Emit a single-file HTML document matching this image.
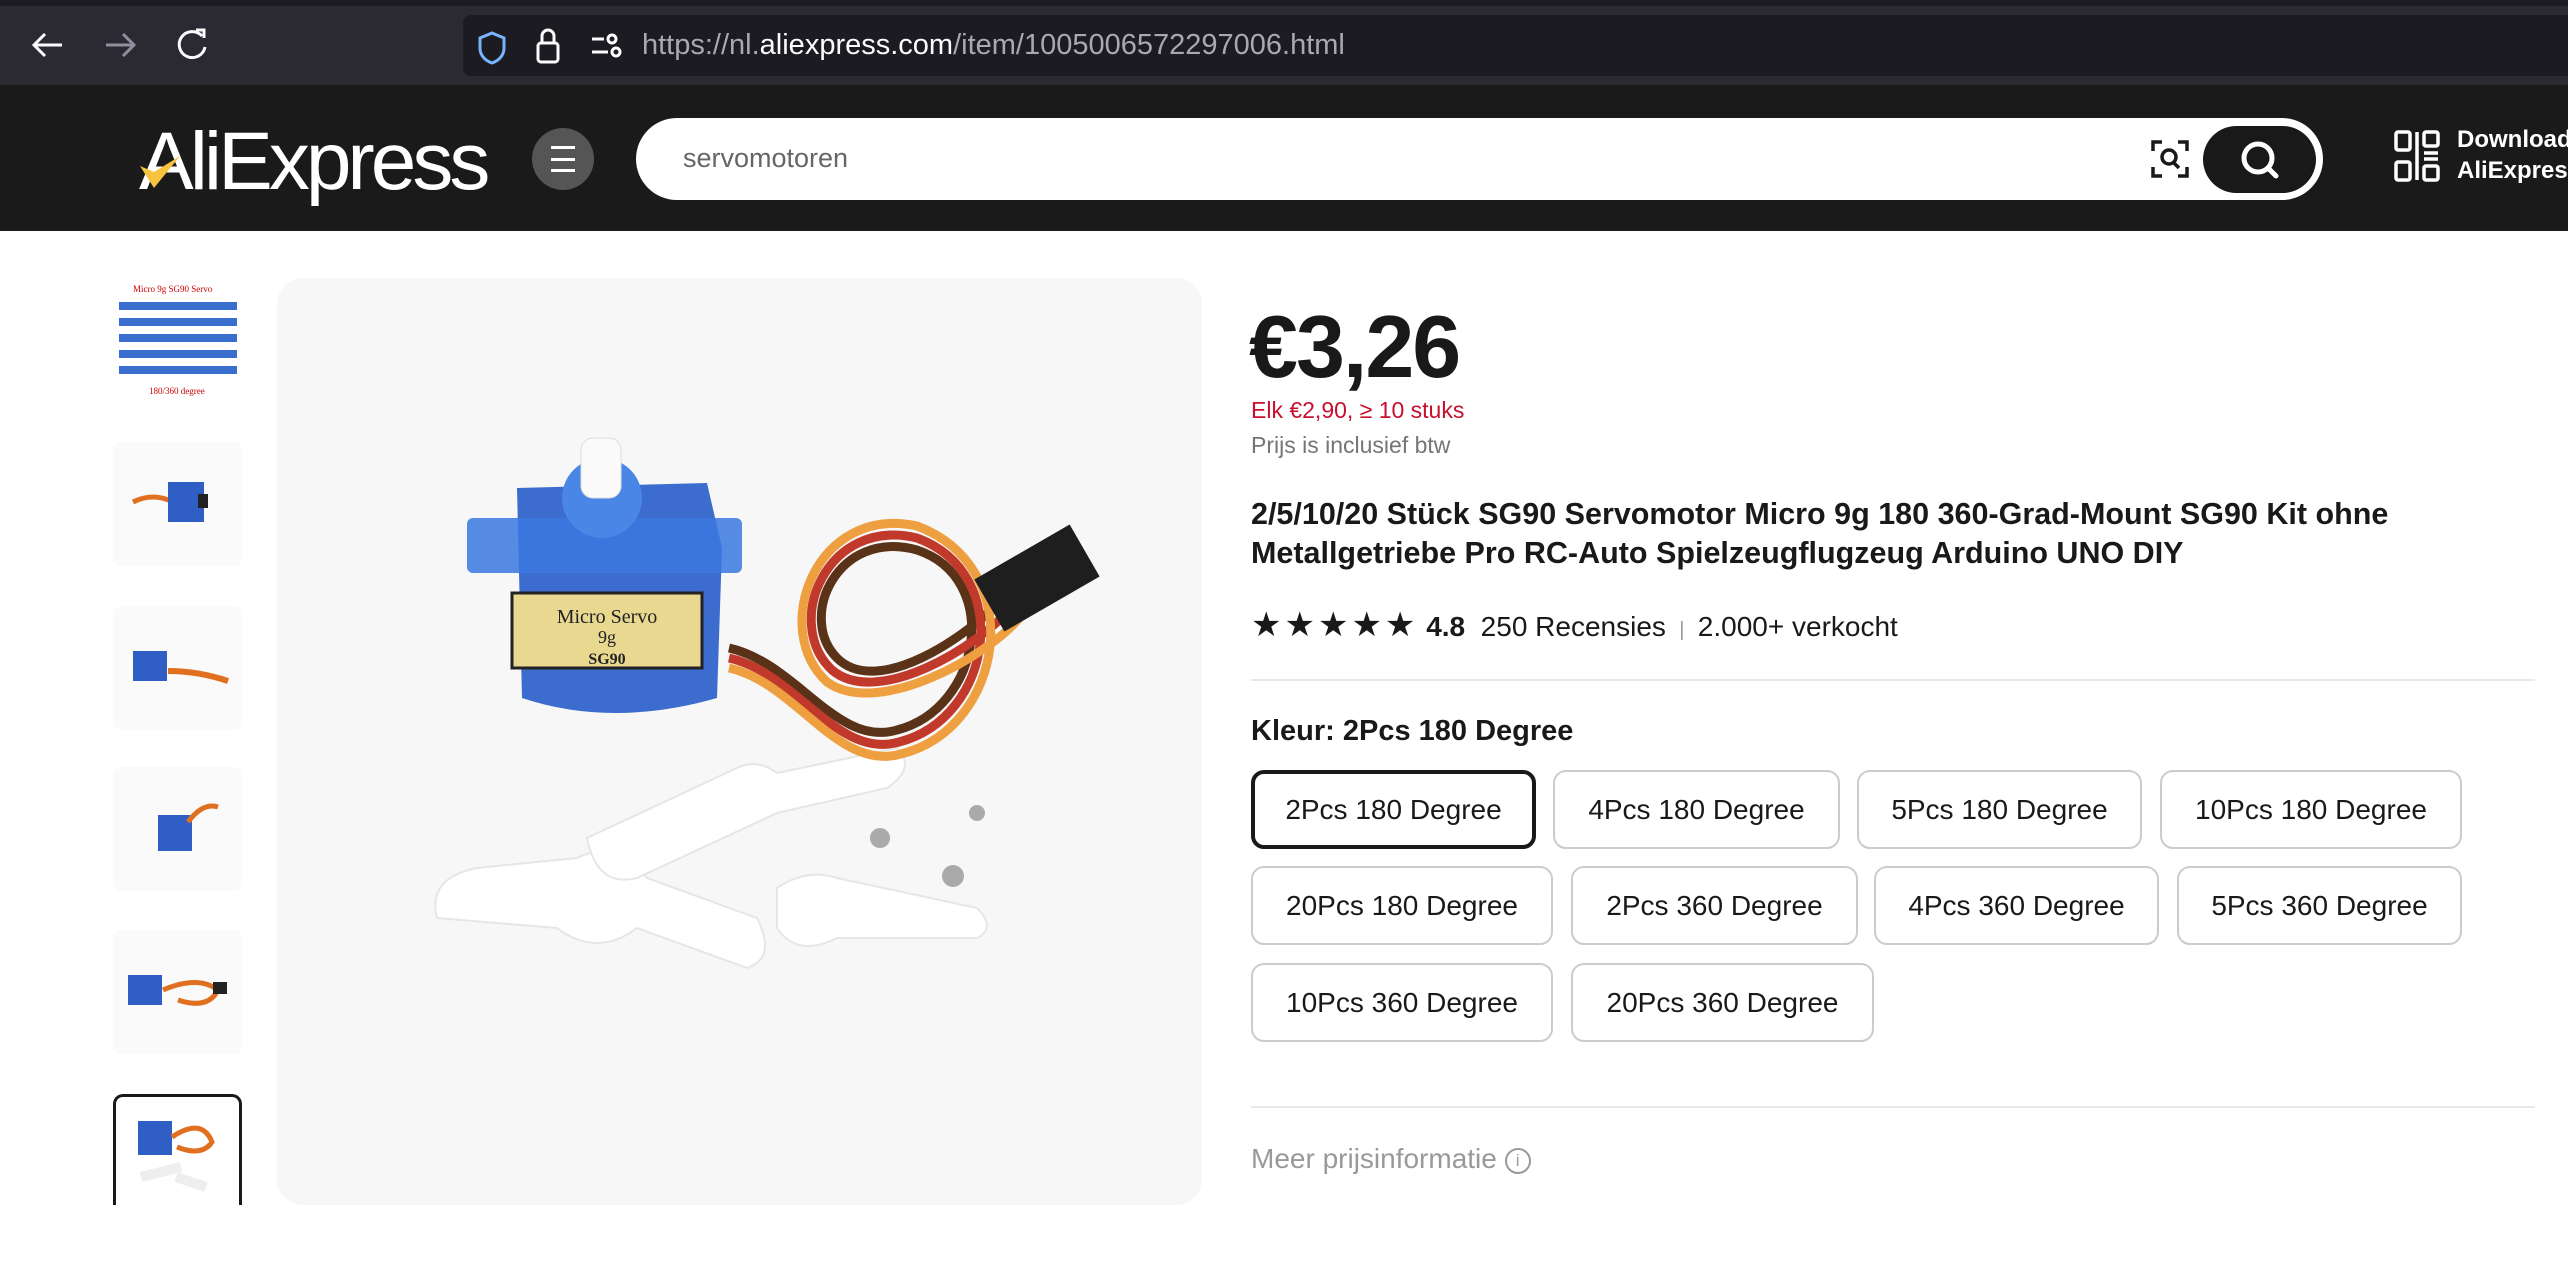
<!DOCTYPE html>
<html><head><meta charset="utf-8"><style>
*{margin:0;padding:0;box-sizing:border-box}
body{width:2568px;height:1260px;overflow:hidden;background:#fff;font-family:"Liberation Sans",sans-serif;position:relative}
.a{position:absolute}
.btn{position:absolute;height:79px;border:2px solid #ccc;border-radius:13px;font-size:28px;color:#191919;display:flex;align-items:center;justify-content:center;white-space:nowrap}
.sel{border:4px solid #191919}
.th{position:absolute;left:113px;width:129px;height:124px;background:#fafafa;border-radius:8px;overflow:hidden}
</style></head><body>
<div class="a" style="left:0;top:0;width:2568px;height:14px;background:#1c1b22"></div>
<div class="a" style="left:0;top:6px;width:2568px;height:79px;background:#2b2a33"></div>
<div class="a" style="left:463px;top:15px;width:2105px;height:61px;background:#1c1b22;border-radius:8px 0 0 8px"></div>
<svg class="a" style="left:30px;top:30px" width="36" height="30" viewBox="0 0 36 30"><path d="M32 15H5M15 4L4 15l11 11" stroke="#fbfbfe" stroke-width="3" fill="none"/></svg>
<svg class="a" style="left:102px;top:30px" width="36" height="30" viewBox="0 0 36 30"><path d="M4 15h27M21 4l11 11-11 11" stroke="#8f8f9d" stroke-width="3" fill="none"/></svg>
<svg class="a" style="left:175px;top:27px" width="34" height="36" viewBox="0 0 34 36"><path d="M27 9A13 13 0 1 0 30 20" stroke="#fbfbfe" stroke-width="3" fill="none"/><path d="M21 3h8v8" stroke="#fbfbfe" stroke-width="3" fill="none"/></svg>
<svg class="a" style="left:477px;top:30px" width="30" height="36" viewBox="0 0 30 36"><path d="M15 3L27 8v10c0 8-6 13-12 15C9 31 3 26 3 18V8z" stroke="#7ab4ff" stroke-width="3" fill="none"/></svg>
<svg class="a" style="left:535px;top:27px" width="26" height="38" viewBox="0 0 26 38"><rect x="3" y="16" width="20" height="19" rx="3" stroke="#fbfbfe" stroke-width="3" fill="none"/><path d="M7 16V9a6 6 0 0 1 12 0v7" stroke="#fbfbfe" stroke-width="3" fill="none"/></svg>
<svg class="a" style="left:590px;top:32px" width="32" height="28" viewBox="0 0 32 28"><path d="M2 7h12M2 20h16" stroke="#fbfbfe" stroke-width="3"/><circle cx="22" cy="7" r="4" stroke="#fbfbfe" stroke-width="3" fill="none"/><circle cx="26" cy="20" r="4" stroke="#fbfbfe" stroke-width="3" fill="none"/></svg>
<div class="a" style="left:642px;top:29px;font-size:29px;color:#a8a8b0;white-space:nowrap">https://nl.<span style="color:#fbfbfe">aliexpress.com</span>/item/1005006572297006.html</div>
<div class="a" style="left:0;top:85px;width:2568px;height:146px;background:#1a1a1a"></div>
<div class="a" style="left:139px;top:112px;font-size:82px;color:#fff;font-weight:400;letter-spacing:-4px;white-space:nowrap;line-height:100px">AliExpress</div>
<svg class="a" style="left:138px;top:152px" width="44" height="40" viewBox="0 0 44 40"><path d="M2 14l14 6L42 4 16 36z" fill="#f7c33f"/></svg>
<div class="a" style="left:532px;top:128px;width:62px;height:62px;border-radius:50%;background:#555"></div>
<div class="a" style="left:551px;top:146px;width:24px;height:26px;border-top:3px solid #fff;border-bottom:3px solid #fff"></div>
<div class="a" style="left:551px;top:158px;width:24px;height:3px;background:#fff"></div>
<div class="a" style="left:636px;top:118px;width:1687px;height:82px;background:#fff;border-radius:41px"></div>
<div class="a" style="left:683px;top:143px;font-size:27px;color:#666">servomotoren</div>
<svg class="a" style="left:2150px;top:139px" width="40" height="40" viewBox="0 0 40 40"><path d="M3 12V3h9M28 3h9v9M37 28v9h-9M12 37H3v-9" stroke="#191919" stroke-width="3.5" fill="none"/><circle cx="19" cy="18" r="7" stroke="#191919" stroke-width="3.5" fill="none"/><path d="M24 24l5 5" stroke="#191919" stroke-width="3.5"/></svg>
<div class="a" style="left:2203px;top:126px;width:113px;height:67px;background:#191919;border-radius:34px"></div>
<svg class="a" style="left:2238px;top:138px" width="44" height="44" viewBox="0 0 44 44"><circle cx="20" cy="20" r="14" stroke="#fff" stroke-width="5" fill="none"/><path d="M30 30l8 8" stroke="#fff" stroke-width="5" stroke-linecap="round"/></svg>
<svg class="a" style="left:2394px;top:130px" width="48" height="52" viewBox="0 0 48 52"><g stroke="#fff" stroke-width="3.5" fill="none"><rect x="2" y="2" width="14" height="18" rx="2"/><rect x="30" y="2" width="14" height="14" rx="2"/><rect x="2" y="32" width="14" height="18" rx="2"/><rect x="30" y="36" width="14" height="14" rx="2"/><path d="M23 2v48M30 23h14M30 29h14"/></g></svg>
<div class="a" style="left:2457px;top:124px;font-size:24px;color:#fff;font-weight:700;line-height:31px;white-space:nowrap">Download<br>AliExpress</div>
<div class="th" style="top:282px;background:#fff"><svg width="129" height="124"><text x="20" y="10" font-size="9" fill="#c00" font-family="Liberation Serif">Micro 9g SG90 Servo</text><g fill="#3a6fd0"><rect x="6" y="20" width="118" height="8"/><rect x="6" y="36" width="118" height="8"/><rect x="6" y="52" width="118" height="8"/><rect x="6" y="68" width="118" height="8"/><rect x="6" y="84" width="118" height="8"/></g><text x="36" y="112" font-size="9" fill="#c00" font-family="Liberation Serif">180/360 degree</text></svg></div>
<div class="th" style="top:442px"><svg width="129" height="124"><path d="M20 60q20-10 40 0" stroke="#e07020" stroke-width="5" fill="none"/><rect x="55" y="40" width="36" height="40" fill="#2f5fc4"/><rect x="85" y="52" width="10" height="14" fill="#222"/></svg></div>
<div class="th" style="top:606px"><svg width="129" height="124"><rect x="20" y="45" width="34" height="30" fill="#2f5fc4"/><path d="M55 65q30 0 60 10" stroke="#e07020" stroke-width="6" fill="none"/></svg></div>
<div class="th" style="top:767px"><svg width="129" height="124"><rect x="45" y="48" width="34" height="36" fill="#2f5fc4"/><path d="M75 55q15-20 30-15" stroke="#e07020" stroke-width="5" fill="none"/></svg></div>
<div class="th" style="top:930px"><svg width="129" height="124"><rect x="15" y="45" width="34" height="30" fill="#2f5fc4"/><path d="M50 60q35-15 55 0q-10 20-40 10" stroke="#e07020" stroke-width="5" fill="none"/><rect x="100" y="52" width="14" height="12" fill="#222"/></svg></div>
<div class="th" style="top:1094px;border:3px solid #191919;border-bottom:none;border-radius:10px 10px 0 0;height:112px;background:#fff"><svg width="123" height="110"><rect x="22" y="24" width="34" height="34" fill="#2f5fc4"/><path d="M56 40q30-20 40 5q-10 15-35 5" stroke="#e07020" stroke-width="5" fill="none"/><path d="M25 80l40-10M60 80l30 10" stroke="#eee" stroke-width="10"/></svg></div>
<div class="a" style="left:0;top:1205px;width:300px;height:60px;background:#fff"></div>
<div class="a" style="left:277px;top:278px;width:925px;height:927px;background:#f7f7f7;border-radius:26px;overflow:hidden">
<svg width="925" height="927" viewBox="0 0 925 927">
<g fill="#fff" stroke="#e6e6e6" stroke-width="2">
<path d="M160 640 Q150 600 200 590 L300 580 Q340 560 370 600 L480 640 Q500 680 470 690 L360 650 Q320 680 280 650 Z"/>
<path d="M310 560 L460 490 Q480 480 500 495 L620 470 Q640 490 610 510 L500 535 L360 600 Q320 610 310 560 Z"/>
<path d="M500 610 Q530 590 560 600 L700 630 Q720 650 700 660 L560 660 Q520 680 500 650 Z"/>
</g>
<g fill="#aaa"><circle cx="603" cy="560" r="10"/><circle cx="700" cy="535" r="8"/><circle cx="676" cy="598" r="11"/></g>
<g fill="none" stroke-width="9">
<path d="M452 370 C520 385 560 470 620 452 C705 430 725 300 640 272 C560 250 520 340 560 380 C600 420 690 360 728 318" stroke="#5a3218"/>
<path d="M452 380 C520 395 560 482 622 464 C716 440 738 296 640 260 C550 238 505 345 555 392 C600 430 700 370 736 328" stroke="#c0392b"/>
<path d="M452 390 C520 405 560 494 624 476 C728 450 752 290 640 248 C540 226 492 350 550 404 C600 440 710 380 744 338" stroke="#eea040"/>
</g>
<rect x="705" y="270" width="110" height="60" fill="#1e1e1e" transform="rotate(-30 760 300)"/>
<path d="M240 210 L430 205 L445 270 L440 420 Q335 450 245 420 Z" fill="#2b5fc9" opacity=".92"/>
<rect x="190" y="240" width="275" height="55" rx="6" fill="#3a78e0" opacity=".85"/>
<circle cx="325" cy="220" r="40" fill="#4a86e6"/>
<rect x="304" y="160" width="40" height="60" rx="12" fill="#fafafa" stroke="#ddd"/>
<rect x="235" y="315" width="190" height="75" fill="#e8d890" stroke="#222" stroke-width="3"/>
<text x="330" y="345" text-anchor="middle" font-size="20" font-family="Liberation Serif" fill="#222">Micro Servo</text>
<text x="330" y="365" text-anchor="middle" font-size="18" font-family="Liberation Serif" fill="#222">9g</text>
<text x="330" y="386" text-anchor="middle" font-size="16" font-weight="bold" font-family="Liberation Serif" fill="#222">SG90</text>
</svg></div>
<div class="a" style="left:1249px;top:296px;font-size:88px;font-weight:700;color:#191919;letter-spacing:-2px">€3,26</div>
<div class="a" style="left:1251px;top:397px;font-size:23px;color:#c8102e">Elk €2,90, ≥ 10 stuks</div>
<div class="a" style="left:1251px;top:432px;font-size:23px;color:#757575">Prijs is inclusief btw</div>
<div class="a" style="left:1251px;top:495px;font-size:30.5px;font-weight:700;color:#191919;line-height:39px;width:1310px;white-space:nowrap">2/5/10/20 Stück SG90 Servomotor Micro 9g 180 360-Grad-Mount SG90 Kit ohne<br>Metallgetriebe Pro RC-Auto Spielzeugflugzeug Arduino UNO DIY</div>
<div class="a" style="left:1251px;top:606px;font-size:28px;color:#191919;white-space:nowrap;line-height:38px"><span style="letter-spacing:3px;font-size:34px">★★★★★</span> <b>4.8</b>&nbsp; 250 Recensies <span style="color:#999;font-size:20px">&nbsp;|&nbsp;</span> 2.000+ verkocht</div>
<div class="a" style="left:1251px;top:679px;width:1284px;height:2px;background:#e8e8e8"></div>
<div class="a" style="left:1251px;top:715px;font-size:29px;font-weight:700;color:#191919">Kleur: 2Pcs 180 Degree</div>
<div class="btn sel" style="left:1251px;top:770px;width:285px">2Pcs 180 Degree</div>
<div class="btn" style="left:1553px;top:770px;width:287px">4Pcs 180 Degree</div>
<div class="btn" style="left:1857px;top:770px;width:285px">5Pcs 180 Degree</div>
<div class="btn" style="left:2160px;top:770px;width:302px">10Pcs 180 Degree</div>
<div class="btn" style="left:1251px;top:866px;width:302px">20Pcs 180 Degree</div>
<div class="btn" style="left:1571px;top:866px;width:287px">2Pcs 360 Degree</div>
<div class="btn" style="left:1874px;top:866px;width:285px">4Pcs 360 Degree</div>
<div class="btn" style="left:2177px;top:866px;width:285px">5Pcs 360 Degree</div>
<div class="btn" style="left:1251px;top:963px;width:302px">10Pcs 360 Degree</div>
<div class="btn" style="left:1571px;top:963px;width:303px">20Pcs 360 Degree</div>
<div class="a" style="left:1251px;top:1106px;width:1284px;height:2px;background:#e8e8e8"></div>
<div class="a" style="left:1251px;top:1143px;font-size:28px;color:#999;white-space:nowrap">Meer prijsinformatie <span style="display:inline-block;width:26px;height:26px;border:2px solid #999;border-radius:50%;font-size:17px;text-align:center;line-height:22px;vertical-align:2px">i</span></div>
</body></html>
